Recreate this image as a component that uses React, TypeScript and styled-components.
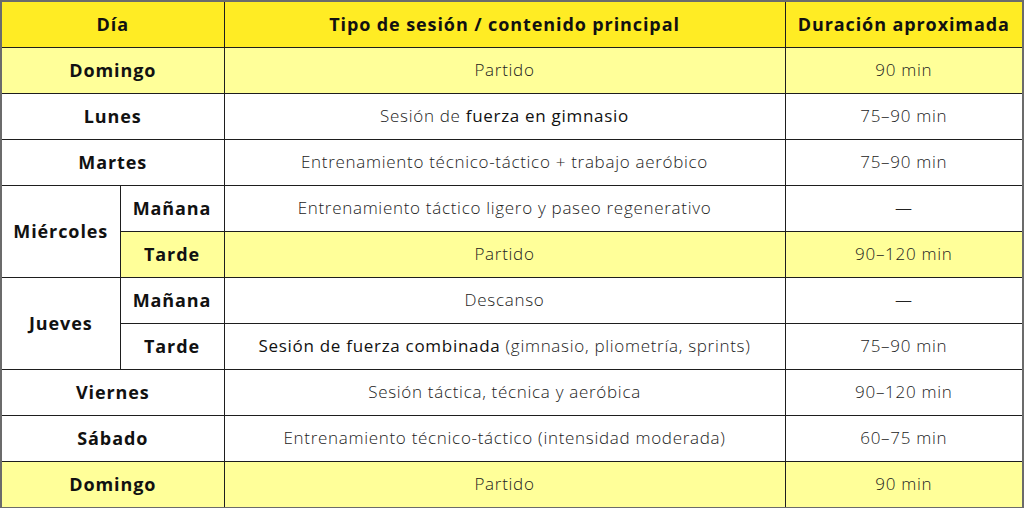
import React from "react";
import styled, {createGlobalStyle} from "styled-components";

const GlobalStyle = createGlobalStyle`
  html, body {
    margin: 0;
    padding: 0;
    background: #ffffff;
  }
  body {
    font-family: "Open Sans", "Noto Sans", sans-serif;
  }
`

const Table = styled.table`
  width: 1024px;
  height: 508px;
  border-collapse: collapse;
  table-layout: fixed;
  border: 2px solid #6b6b6b;
  box-sizing: border-box;
`

const HeadCell = styled.th`
  height: 43px;
  padding: 0 0 2px;
  background: #ffec24;
  border: 1px solid #1e1e1e;
  font-size: 18px;
  line-height: 22px;
  letter-spacing: 0.9px;
  font-weight: 700;
  color: #111;
  text-align: center;
  vertical-align: middle;
  white-space: nowrap;
`

const DayCell = styled.td<{ $highlight: boolean }>`
  height: 43px;
  padding: 0 0 2px;
  background: ${p => p.$highlight ? '#ffff99' : '#ffffff'};
  border: 1px solid #1e1e1e;
  font-size: 18px;
  line-height: 22px;
  letter-spacing: 0.9px;
  font-weight: 700;
  color: #111;
  text-align: center;
  vertical-align: middle;
  white-space: nowrap;
`

const BodyCell = styled.td<{ $highlight: boolean }>`
  height: 43px;
  padding: 0 0 2px;
  background: ${p => p.$highlight ? '#ffff99' : '#ffffff'};
  border: 1px solid #1e1e1e;
  font-size: 17px;
  line-height: 22px;
  letter-spacing: 0.7px;
  font-weight: 300;
  color: #222;
  text-align: center;
  vertical-align: middle;
  white-space: nowrap;
`

const Strong = styled.span`
  font-weight: 400;
  color: #111;
`

type Row = {
  day?: string
  dayRows?: number
  part?: string
  content: React.ReactNode
  duration: string
  highlight?: boolean
}

const rows: Row[] = [
  {day: 'Domingo', content: 'Partido', duration: '90 min', highlight: true},
  {day: 'Lunes', content: <>Sesión de <Strong>fuerza en gimnasio</Strong></>, duration: '75–90 min'},
  {day: 'Martes', content: 'Entrenamiento técnico-táctico + trabajo aeróbico', duration: '75–90 min'},
  {day: 'Miércoles', dayRows: 2, part: 'Mañana', content: 'Entrenamiento táctico ligero y paseo regenerativo', duration: '—'},
  {part: 'Tarde', content: 'Partido', duration: '90–120 min', highlight: true},
  {day: 'Jueves', dayRows: 2, part: 'Mañana', content: 'Descanso', duration: '—'},
  {part: 'Tarde', content: <><Strong>Sesión de fuerza combinada</Strong> (gimnasio, pliometría, sprints)</>, duration: '75–90 min'},
  {day: 'Viernes', content: 'Sesión táctica, técnica y aeróbica', duration: '90–120 min'},
  {day: 'Sábado', content: 'Entrenamiento técnico-táctico (intensidad moderada)', duration: '60–75 min'},
  {day: 'Domingo', content: 'Partido', duration: '90 min', highlight: true},
]

export default function App() {
  return (
    <>
      <GlobalStyle/>
      <Table>
        <colgroup>
          <col style={{width: 119}}/>
          <col style={{width: 104}}/>
          <col style={{width: 561}}/>
          <col/>
        </colgroup>
        <thead>
          <tr>
            <HeadCell colSpan={2}>Día</HeadCell>
            <HeadCell>Tipo de sesión / contenido principal</HeadCell>
            <HeadCell>Duración aproximada</HeadCell>
          </tr>
        </thead>
        <tbody>
          {rows.map((r, i) => (
            <tr key={i}>
              {r.day && (
                <DayCell
                  rowSpan={r.dayRows ?? 1}
                  colSpan={r.part ? 1 : 2}
                  $highlight={!!r.highlight && !r.dayRows}
                >
                  {r.day}
                </DayCell>
              )}
              {r.part && <DayCell $highlight={!!r.highlight}>{r.part}</DayCell>}
              <BodyCell $highlight={!!r.highlight}>{r.content}</BodyCell>
              <BodyCell $highlight={!!r.highlight}>{r.duration}</BodyCell>
            </tr>
          ))}
        </tbody>
      </Table>
    </>
  )
}
